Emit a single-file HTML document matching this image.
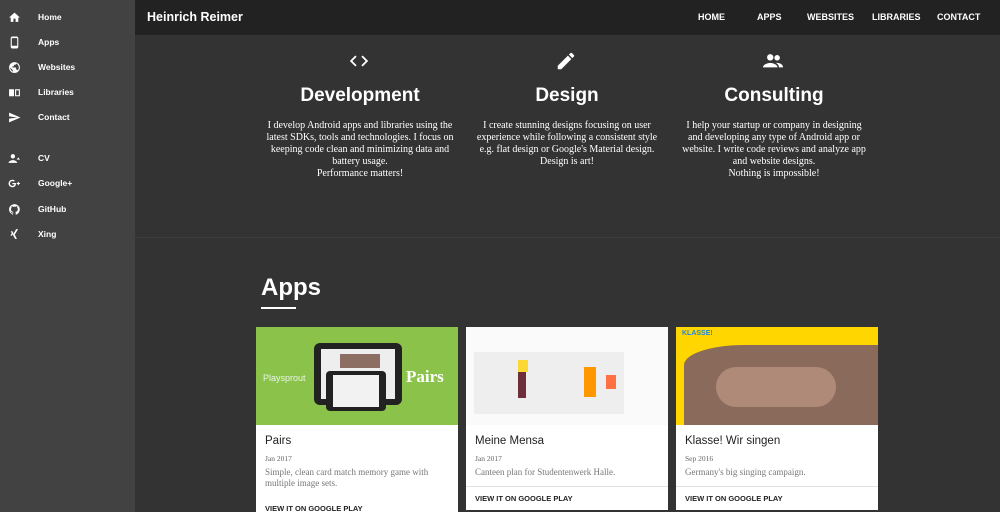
<!DOCTYPE html>
<html><head><meta charset="utf-8"><style>
*{margin:0;padding:0;box-sizing:border-box}
html,body{width:1000px;height:512px;overflow:hidden}
body{background:#333;font-family:"Liberation Sans",sans-serif;position:relative}
#side{position:absolute;left:0;top:0;width:135px;height:512px;background:#424242}
.si{position:absolute;left:0;height:20px;color:#fff;font-size:8.5px;font-weight:bold}
.si svg{position:absolute;left:8px;top:4px;width:13px;height:13px;fill:#fff}
.si span{position:absolute;left:38px;top:5px}
#hdr{position:absolute;left:135px;top:0;width:865px;height:35px;background:#222}
#hdr .t{position:absolute;left:12px;top:10px;color:#fff;font-weight:bold;font-size:12.5px}
#hdr .n{position:absolute;top:12px;color:#fff;font-weight:bold;font-size:9px}
.feat{position:absolute;top:0;width:200px;text-align:center;color:#fff}
.feat h2{position:absolute;top:85px;width:100%;font-size:19px;font-weight:bold}
.feat p{position:absolute;top:120px;left:0;width:200px;font-family:"Liberation Serif",serif;font-size:10px;line-height:12px;color:#fff}
.feat svg{position:absolute;top:50px;left:88px;width:22px;height:22px;fill:#fff}
#div{position:absolute;left:135px;top:237px;width:865px;height:1px;background:#3d3d3d}
#apps{position:absolute;left:261px;top:274px;color:#fff;font-size:24px;font-weight:bold}
#ul{position:absolute;left:261px;top:307px;width:35px;height:2px;background:#fff}
.card{position:absolute;top:327px;width:202px;background:#fff;overflow:hidden}
.card .img{height:98px;position:relative;overflow:hidden}
.card h3{position:absolute;top:108px;left:9px;font-size:11.5px;font-weight:normal;color:#222}
.card .d{position:absolute;top:127px;left:9px;font-family:"Liberation Serif",serif;font-size:7.5px;color:#666}
.card .x{position:absolute;top:140px;left:9px;width:185px;font-family:"Liberation Serif",serif;font-size:9px;line-height:11px;color:#777}
.card .l{position:absolute;left:9px;font-size:7.5px;font-weight:bold;color:#222}
</style></head><body>
<div id="side">
<div class="si" style="top:7px"><svg viewBox="0 0 24 24"><path d="M10 20v-6h4v6h5v-8h3L12 3 2 12h3v8z"/></svg><span>Home</span></div>
<div class="si" style="top:32px"><svg viewBox="0 0 24 24"><path d="M16 1H8C6.3 1 5 2.3 5 4v16c0 1.7 1.3 3 3 3h8c1.7 0 3-1.3 3-3V4c0-1.7-1.3-3-3-3zm1 17H7V4h10z"/></svg><span>Apps</span></div>
<div class="si" style="top:57px"><svg viewBox="0 0 24 24"><path d="M12 2a10 10 0 100 20 10 10 0 000-20zm-1 17.9A8 8 0 014 12l5 5v1c0 1.1.9 2 2 2zm6.9-2.5A2 2 0 0016 16h-1v-3c0-.6-.4-1-1-1H8v-2h2c.6 0 1-.4 1-1V7h2c1.1 0 2-.9 2-2v-.4a8 8 0 012.9 12.8z"/></svg><span>Websites</span></div>
<div class="si" style="top:82px"><svg viewBox="0 0 24 24"><path d="M2 6h9v13H2zM13 6h9v13h-9zM15 8v9h5V8z"/></svg><span>Libraries</span></div>
<div class="si" style="top:107px"><svg viewBox="0 0 24 24"><path d="M2 21l21-9L2 3v7l15 2-15 2z"/></svg><span>Contact</span></div>
<div class="si" style="top:148px"><svg viewBox="0 0 24 24"><circle cx="9" cy="8" r="4"/><path d="M1 20c0-3 5-5 8-5s8 2 8 5zM19 10l3 4h-6z"/></svg><span>CV</span></div>
<div class="si" style="top:173px"><svg viewBox="0 0 24 24"><path d="M8 11v2.4h4c-.2 1-1.2 3-4 3a4.4 4.4 0 010-8.8c1.4 0 2.3.6 2.8 1l1.9-1.8A6.7 6.7 0 008 5a7 7 0 000 14c4 0 6.7-2.8 6.7-6.8l-.1-1.2zM22 11h-2V9h-2v2h-2v2h2v2h2v-2h2z"/></svg><span>Google+</span></div>
<div class="si" style="top:199px"><svg viewBox="0 0 24 24"><path d="M12 2a10 10 0 00-3.2 19.5c.5 0 .7-.2.7-.5v-1.7c-2.8.6-3.4-1.300-3.4-1.3-.4-1.2-1.1-1.5-1.1-1.5-.9-.6.1-.6.1-.6 1 .1 1.5 1 1.5 1 .9 1.5 2.3 1.1 2.9.8.1-.6.3-1.1.6-1.3-2.2-.3-4.6-1.1-4.6-5 0-1.1.4-2 1-2.7 0-.2-.4-1.3.1-2.6 0 0 .8-.3 2.7 1a9.4 9.4 0 015 0c1.9-1.3 2.7-1 2.7-1 .5 1.3.2 2.4.1 2.600.6.7 1 1.6 1 2.7 0 3.9-2.3 4.7-4.6 5 .4.3.7.9.7 1.9V21c0 .3.2.6.7.5A10 10 0 0012 2z"/></svg><span>GitHub</span></div>
<div class="si" style="top:224px"><svg viewBox="0 0 24 24"><path d="M5 6h3l2 3.5L7.5 14h-3L7 9.5zM15 2h3.5l-6 10.5L16.5 20H13l-4-7.5z"/></svg><span>Xing</span></div>
</div>
<div id="hdr"><div class="t">Heinrich Reimer</div>
<div class="n" style="left:563px">HOME</div><div class="n" style="left:622px">APPS</div><div class="n" style="left:672px">WEBSITES</div><div class="n" style="left:737px">LIBRARIES</div><div class="n" style="left:802px">CONTACT</div></div>
<div class="feat" style="left:260px"><svg viewBox="0 0 24 24"><path d="M9.4 16.6L4.8 12l4.6-4.6L8 6l-6 6 6 6zm5.2 0l4.6-4.6-4.6-4.6L16 6l6 6-6 6z"/></svg><h2>Development</h2><p>I develop Android apps and libraries using the<br>latest SDKs, tools and technologies. I focus on<br>keeping code clean and minimizing data and<br>battery usage.<br>Performance matters!</p></div>
<div class="feat" style="left:467px"><svg viewBox="0 0 24 24"><path d="M3 17.2V21h3.8L17.8 9.9l-3.7-3.7zM20.7 7c.4-.4.4-1 0-1.4l-2.3-2.3c-.4-.4-1-.4-1.4 0l-1.8 1.8 3.7 3.7z"/></svg><h2>Design</h2><p>I create stunning designs focusing on user<br>experience while following a consistent style<br>e.g. flat design or Google's Material design.<br>Design is art!</p></div>
<div class="feat" style="left:674px"><svg viewBox="0 0 24 24"><circle cx="9" cy="8" r="3.5"/><circle cx="16.5" cy="8.5" r="3"/><path d="M1 19c0-3 5-5 8-5s8 2 8 5zM15 14.1c2.5-.4 8 .6 8 4.9h-4.5c0-2-1.3-3.8-3.5-4.9z"/></svg><h2>Consulting</h2><p>I help your startup or company in designing<br>and developing any type of Android app or<br>website. I write code reviews and analyze app<br>and website designs.<br>Nothing is impossible!</p></div>
<div id="div"></div>
<div id="apps">Apps</div><div id="ul"></div>
<div class="card" style="left:256px;height:185px">
 <div class="img" style="background:#8bc34a">
  <div style="position:absolute;left:58px;top:16px;width:88px;height:62px;background:#222;border-radius:6px"></div>
  <div style="position:absolute;left:65px;top:22px;width:74px;height:50px;background:#eee"></div>
  <div style="position:absolute;left:70px;top:44px;width:60px;height:40px;background:#222;border-radius:4px"></div>
  <div style="position:absolute;left:77px;top:48px;width:46px;height:32px;background:#f2f2f2"></div>
  <div style="position:absolute;left:84px;top:27px;width:40px;height:14px;background:#8d6e63"></div>
  <div style="position:absolute;left:7px;top:46px;color:#e8f5e9;font-size:9px">Playsprout</div>
  <div style="position:absolute;left:150px;top:40px;color:#fff;font-family:'Liberation Serif',serif;font-weight:bold;font-size:17px">Pairs</div>
 </div>
 <h3>Pairs</h3><div class="d">Jan 2017</div><div class="x">Simple, clean card match memory game with multiple image sets.</div><div class="l" style="top:177px">VIEW IT ON GOOGLE PLAY</div>
</div>
<div class="card" style="left:466px;height:183px">
 <div class="img" style="background:#fafafa">
  <div style="position:absolute;left:8px;top:25px;width:150px;height:62px;background:#eee"></div>
  <div style="position:absolute;left:52px;top:33px;width:10px;height:12px;background:#fdd835"></div>
  <div style="position:absolute;left:52px;top:45px;width:8px;height:26px;background:#6d2f3a"></div>
  <div style="position:absolute;left:118px;top:40px;width:12px;height:30px;background:#ff9800"></div>
  <div style="position:absolute;left:140px;top:48px;width:10px;height:14px;background:#ff7043"></div>
 </div>
 <h3>Meine Mensa</h3><div class="d">Jan 2017</div><div class="x">Canteen plan for Studentenwerk Halle.</div>
 <div style="position:absolute;top:159px;left:0;width:202px;height:1px;background:#e0e0e0"></div><div class="l" style="top:167px">VIEW IT ON GOOGLE PLAY</div>
</div>
<div class="card" style="left:676px;height:183px">
 <div class="img" style="background:#ffd600">
  <div style="position:absolute;left:8px;top:18px;width:194px;height:80px;background:#8a6a5a;border-top-left-radius:60px 20px"></div>
  <div style="position:absolute;left:40px;top:40px;width:120px;height:40px;background:#b08a78;border-radius:30px"></div>
  <div style="position:absolute;left:6px;top:3px;color:#1e88e5;font-size:7px;font-weight:bold">KLASSE!</div>
 </div>
 <h3>Klasse! Wir singen</h3><div class="d">Sep 2016</div><div class="x">Germany's big singing campaign.</div>
 <div style="position:absolute;top:159px;left:0;width:202px;height:1px;background:#e0e0e0"></div><div class="l" style="top:167px">VIEW IT ON GOOGLE PLAY</div>
</div>
</body></html>
